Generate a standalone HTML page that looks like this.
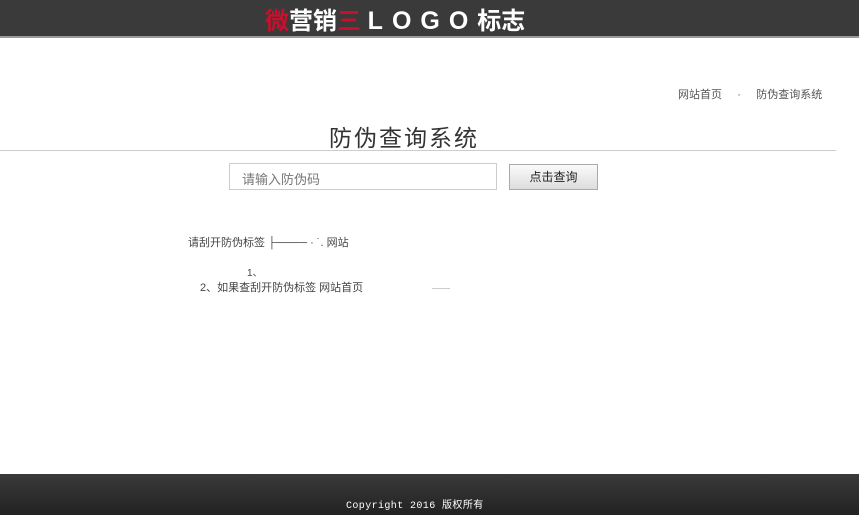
<!DOCTYPE html>
<html><head><meta charset="utf-8"><style>
*{margin:0;padding:0;box-sizing:border-box}
body{width:859px;height:515px;background:#fff;position:relative;overflow:hidden;font-family:"Liberation Sans","Noto Sans CJK SC",sans-serif;color:#333}
.top{position:absolute;left:0;top:0;width:859px;height:38px;background:#3a3a3a;border-bottom:2px solid #999}
.logo{position:absolute;left:265px;top:1px;font-size:24px;font-weight:bold;color:#fff;white-space:nowrap}
.abs{position:absolute;white-space:nowrap}
.foot{position:absolute;left:0;top:474px;width:859px;height:41px;background:linear-gradient(#3a3a3a,#222)}
</style></head><body>
<div class="top"><div class="logo"><span style="color:#c8102e">微</span>营销<span style="color:#c8102e">三</span> <span style="letter-spacing:9px;font-size:25px;font-family:'Liberation Sans',sans-serif">LOGO</span>标志</div></div>
<div class="abs" style="left:678px;top:86px;font-size:11px;color:#555">网站首页 &nbsp;&nbsp;&nbsp;&nbsp;·&nbsp;&nbsp;&nbsp;&nbsp; 防伪查询系统</div>
<div class="abs" style="left:329px;top:119px;font-size:23px;color:#333;letter-spacing:2px">防伪查询系统</div>
<div class="abs" style="left:0;top:150px;width:836px;height:1px;background:#ccc"></div>
<div class="abs" style="left:229px;top:163px;width:268px;height:27px;border:1px solid #ccc;font-size:13px;color:#777;padding:5px 0 0 12px">请输入防伪码</div>
<div class="abs" style="left:509px;top:164px;width:89px;height:26px;border:1px solid #aaa;background:linear-gradient(#fafafa,#ddd);font-size:12px;color:#222;text-align:center;line-height:24px">点击查询</div>
<div class="abs" style="left:188px;top:234px;font-size:11px;color:#444">请刮开防伪标签 ├──── · ˙. 网站</div>
<div class="abs" style="left:247px;top:264px;font-size:10px;color:#444">1、</div>
<div class="abs" style="left:200px;top:279px;font-size:11px;color:#444">2、如果查刮开防伪标签 网站首页</div>
<div class="abs" style="left:432px;top:288px;width:18px;height:1px;background:#ccc"></div>
<div class="foot"><div class="abs" style="left:346px;top:22px;font-size:10px;color:#fff;letter-spacing:0.4px;font-family:'Liberation Mono','Noto Sans CJK SC',monospace">Copyright 2016 版权所有</div></div>
</body></html>
